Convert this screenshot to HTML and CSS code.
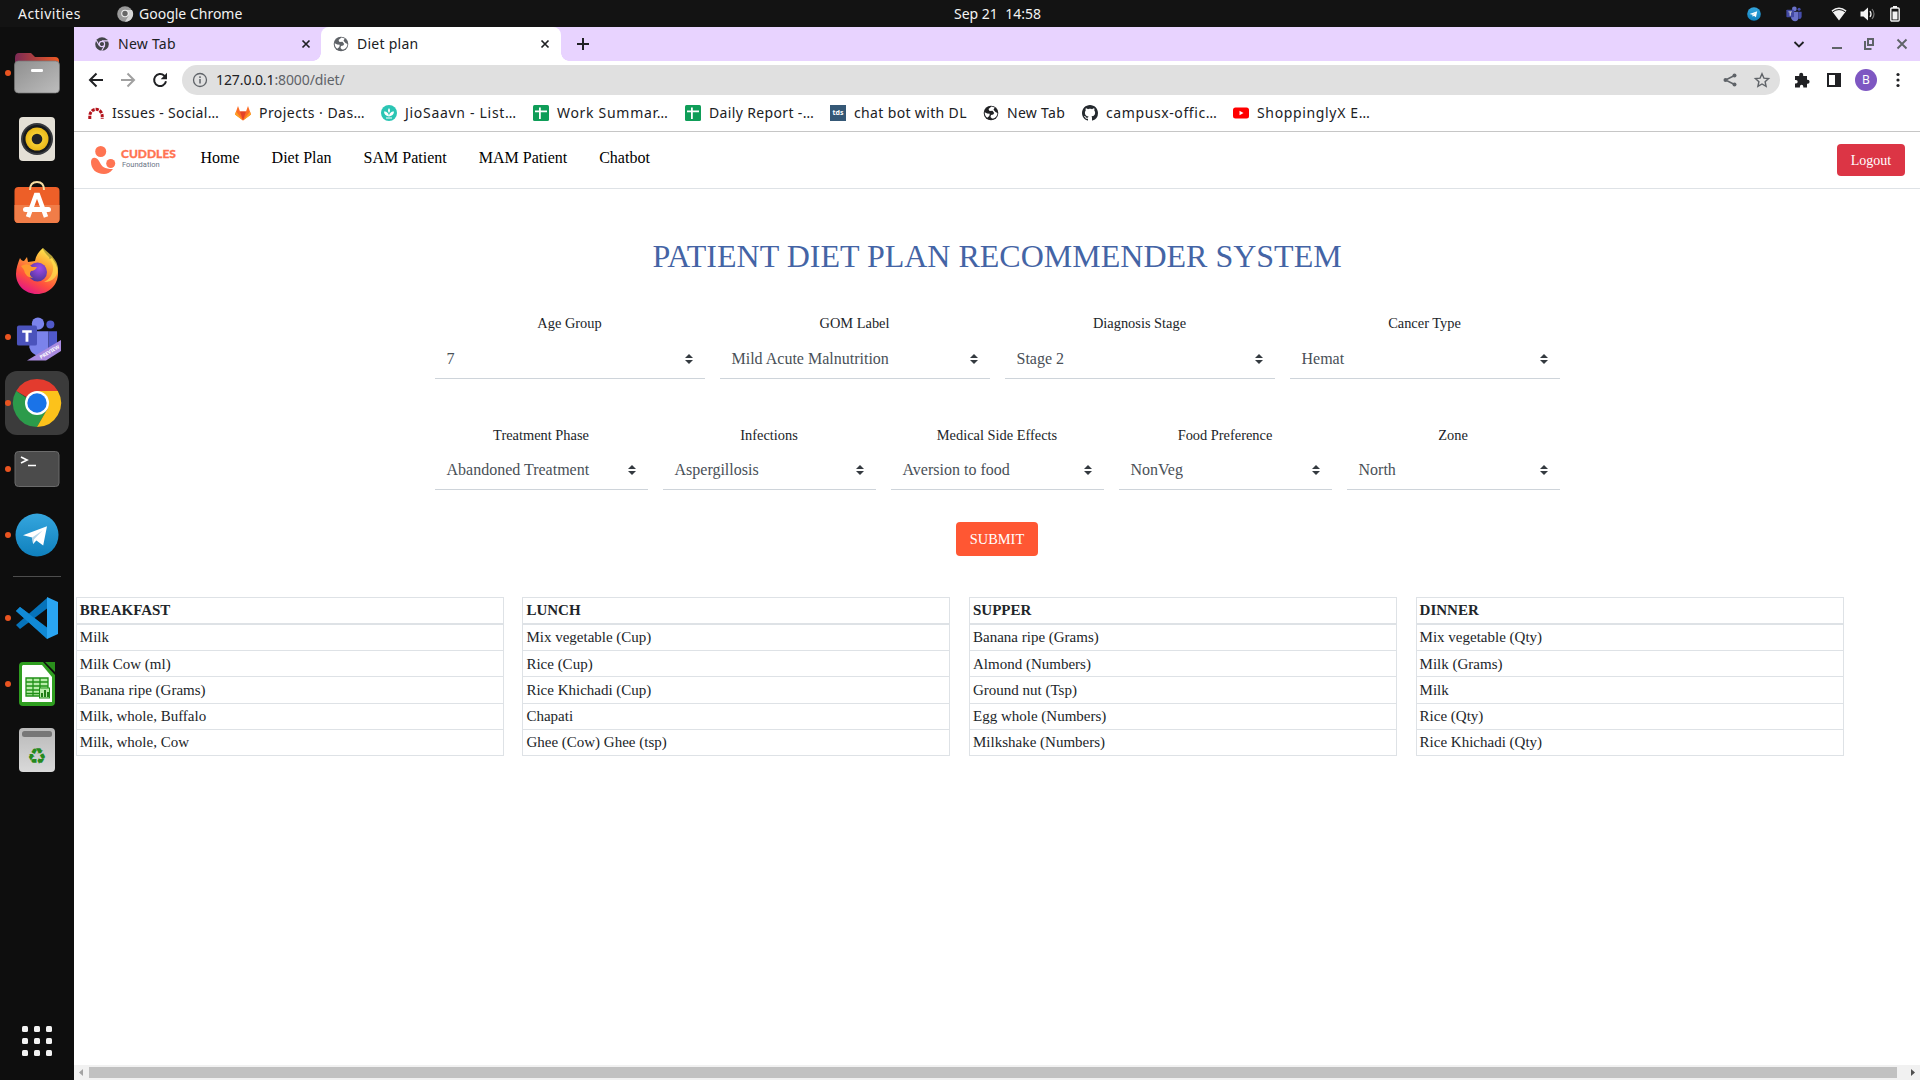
FILE: index.html
```html
<!DOCTYPE html>
<html lang="en">
<head>
<meta charset="utf-8">
<title>Diet plan</title>
<link rel="stylesheet" href="styles.css">
</head>
<body>
<svg class="defs" width="0" height="0" aria-hidden="true">
  <defs>
    <linearGradient id="folderBack" x1="0" y1="0" x2="1" y2="0"><stop offset="0" stop-color="#7b2a55"/><stop offset="1" stop-color="#ef5a24"/></linearGradient>
    <linearGradient id="folderFront" x1="0" y1="0" x2="1" y2="1"><stop offset="0" stop-color="#8f8f8f"/><stop offset="1" stop-color="#bdbdbd"/></linearGradient>
    <linearGradient id="foxBody" x1=".8" y1="0" x2=".3" y2="1"><stop offset="0" stop-color="#fff44f"/><stop offset=".35" stop-color="#ffa436"/><stop offset=".7" stop-color="#ff4f3e"/><stop offset="1" stop-color="#e31587"/></linearGradient>
    <radialGradient id="foxGlobe" cx=".6" cy=".3" r=".8"><stop offset="0" stop-color="#a04be8"/><stop offset="1" stop-color="#45338f"/></radialGradient>
    <linearGradient id="tg" x1="0" y1="0" x2="0" y2="1"><stop offset="0" stop-color="#35a6de"/><stop offset="1" stop-color="#0f80bd"/></linearGradient>
    <linearGradient id="bin" x1="0" y1="0" x2="0" y2="1"><stop offset="0" stop-color="#b9b9b9"/><stop offset="1" stop-color="#d9d9d9"/></linearGradient>
    <radialGradient id="cone"><stop offset="0" stop-color="#ffe14a"/><stop offset="1" stop-color="#eab818"/></radialGradient>
    <symbol id="telegram" viewBox="0 0 44 44"><circle cx="22" cy="22" r="21.5" fill="url(#tg)"/><path d="M8 22.3 32 13.2l-3.8 19.4-6.8-5-3.3 3.3-.9-6.3z" fill="#fff"/><path d="m17.2 24.6 10.3-7-8.4 8.6-1 4.700z" fill="#b4d6ea"/></symbol>
    <symbol id="teams" viewBox="0 0 44 44"><circle cx="23" cy="8" r="6.500" fill="#7b83eb"/><circle cx="36" cy="9" r="4.200" fill="#5059c9"/><path d="M14 16h20v17q0 8-9 9-9-1-11-9z" fill="#7b83eb"/><path d="M34 16h9v14q-1 6-9 6z" fill="#5059c9"/><rect x="1" y="10" width="21" height="21" rx="2" fill="#4b53bc"/><path d="M6.500 15h10v2.500h-3.500v9.500h-3v-9.500H6.500z" fill="#fff"/></symbol>
    <symbol id="sheet" viewBox="0 0 16 16"><rect width="16" height="16" rx="1.500" fill="#0f9d58"/><path d="M6 2.500h1.800v3h6.200v1.800H7.800V14H6V7.300H2V5.500h4z" fill="#fff"/></symbol>
    <symbol id="globe" viewBox="0 0 16 16"><circle cx="8" cy="8" r="7.300" fill="currentColor"/><path d="M8.500 1.500 5.500 4l1 2 3-.3 1.700 2.200-1 1.500-2.200.6-.5 2 1.500 1.600c3-.3 5.400-2.400 5.400-5.700L12.500 7l-2-2.300 1.200-2.200zM1.700 7.300l2.500 1.200 2.600.3-.5 2.200-2 1.800C2.500 11.500 1.700 10 1.700 7.300z" fill="var(--hole)"/></symbol>
    <symbol id="close" viewBox="0 0 10 10"><path d="m1.500 1.500 7 7m0-7-7 7" stroke="currentColor" stroke-width="1.700"/></symbol>
    <symbol id="updown" viewBox="0 0 4 5"><path d="M2 0 0 2h4zm0 5L0 3h4z" fill="#343a40"/></symbol>
  </defs>
</svg>
<div class="desktop">
  <header class="panel">
    <span class="activities">Activities</span>
    <svg class="panel-app-icon" viewBox="0 0 16 16"><circle cx="8" cy="8" r="7.800" fill="#9a9a9a"/><path d="M8 4h7A7.800 7.800 0 0 1 8 15.800L11.500 10z" fill="#d5d5d5"/><circle cx="8" cy="7.500" r="3.800" fill="#eee"/><circle cx="8" cy="7.500" r="2.700" fill="#666"/></svg>
    <span class="panel-app">Google Chrome</span>
    <span class="clock">Sep 21&nbsp; 14:58</span>
    <div class="tray">
      <svg class="tray-tg"><use href="#telegram"/></svg>
      <svg class="tray-teams"><use href="#teams"/></svg>
      <svg class="tray-wifi" viewBox="0 0 16 14"><path d="M.5 3.500Q8-2.500 15.500 3.500L8 13.500z" fill="#f2f2f2"/><path d="M1.800 4.800Q8 .3 14.200 4.800" fill="none" stroke="#131313"/></svg>
      <svg class="tray-vol" viewBox="0 0 16 14"><path d="M.5 4.500h3L8 .5v13l-4.500-4h-3z" fill="#f2f2f2"/><path d="M10 4q2 3 0 6" fill="none" stroke="#f2f2f2" stroke-width="1.300"/><path d="M12 2q4 5 0 10" fill="none" stroke="#777" stroke-width="1.200"/></svg>
      <svg class="tray-bat" viewBox="0 0 10 16"><path d="M3 0h4v2H3z" fill="#f2f2f2"/><rect x=".8" y="2" width="8.400" height="13" rx="1" fill="none" stroke="#f2f2f2" stroke-width="1.400"/><path d="M2.500 5.500h5v8h-5z" fill="#f2f2f2"/></svg>
    </div>
  </header>
  <div class="workspace">
    <nav class="dock">
      <div class="dock-item running"><svg viewBox="0 0 48 48"><path d="M2 9q0-5 4-5h12l4 4h20q4 0 4 4v10H2z" fill="url(#folderBack)"/><rect x="1.500" y="12" width="45" height="32" rx="4" fill="url(#folderFront)" stroke="#777" stroke-width=".7"/><rect x="18" y="20" width="12" height="3" rx="1.300" fill="#fff"/></svg></div>
      <div class="dock-item"><svg viewBox="0 0 48 48"><rect x="6" y="2" width="36" height="44" rx="4" fill="#e4e0d6"/><circle cx="24" cy="24" r="16" fill="#36383c"/><circle cx="24" cy="24" r="14" fill="#171a1d"/><circle cx="24" cy="24" r="11.500" fill="url(#cone)"/><circle cx="24" cy="24" r="5.300" fill="#202226"/></svg></div>
      <div class="dock-item"><svg viewBox="0 0 48 48"><rect x="1.500" y="6" width="45" height="36" rx="4" fill="#ed5f28"/><path d="M1.500 24h45v14q0 4-4 4h-37q-4 0-4-4z" fill="#f17d48"/><path d="M17 9q0-8 7-8t7 8" fill="none" stroke="#f6dda2" stroke-width="2"/><path d="m15 36 8-22h2l8 22" fill="none" stroke="#fff" stroke-width="4.500"/><rect x="10" y="26" width="28" height="5" rx="2.500" fill="#fff"/></svg></div>
      <div class="dock-item"><svg viewBox="0 0 48 48"><path d="M7 11c1 2 2 3 4 3l3-4 1 5 7-1c1-5 3-9 8-13 1 5 5 7 7 11l2-1c4 6 6 10 6 15 0 12-9 21-21 21S3 38 3 27c0-6 2-11 4-16z" fill="url(#foxBody)"/><path d="M30 1c0 6 8 9 10 18 1 8-4 14-9 16 9 0 14-6 14-14-1-6-3-8-6-12z" fill="#ffe14d" opacity=".7"/><circle cx="24.500" cy="25" r="9.500" fill="url(#foxGlobe)"/><path d="M8 19q7-4 11 1h5q-2 4-6 4-3 4 2 7-8-1-9-8z" fill="#ff9a2f"/></svg></div>
      <div class="dock-item running"><svg viewBox="0 0 48 48"><use href="#teams" x="2" y="3" width="44" height="42"/><path d="M14 47.500 48 27v11L33 47.500z" fill="#a98be0"/><text x="28" y="46" class="preview" transform="rotate(-31 28 46)">PREVIEW</text></svg></div>
      <div class="dock-item running focused"><svg viewBox="0 0 48 48"><path d="M24 24 3.200 12A24 24 0 0 1 44.800 12z" fill="#e33b2e"/><path d="M24 24h-3L3.200 12A24 24 0 0 0 24 48l10.400-18z" fill="#2c9b4b"/><path d="M24 12h20.800A24 24 0 0 1 24 48l10.400-18z" fill="#fcc21b"/><circle cx="24" cy="24" r="12" fill="#fff"/><circle cx="24" cy="24" r="9.700" fill="#1a73e8"/></svg></div>
      <div class="dock-item running"><svg viewBox="0 0 48 48"><rect x="2" y="6.500" width="44" height="35" rx="3.500" fill="#4b4b4b" stroke="#6b6b6b"/><path d="m8 12 6 3-6 3M15 20.500h8" fill="none" stroke="#fff" stroke-width="1.700"/></svg></div>
      <div class="dock-item running"><svg viewBox="0 0 48 48"><use href="#telegram" x="2" y="2" width="44" height="44"/></svg></div>
      <div class="dock-separator"></div>
      <div class="dock-item running"><svg viewBox="0 0 48 48"><path d="m3 17 4-4 29 22-2 9z" fill="#0f85d0"/><path d="m3 31 4 4 29-22-2-9z" fill="#0673ba"/><path d="m3 17 4-4 6 4.500L40 39l-6 6z" fill="#118ad6"/><path d="m34 3 11 5v32l-11 5z" fill="#2aa5f2"/></svg></div>
      <div class="dock-item running"><svg viewBox="0 0 48 48"><path d="M10 2h20l12 13v27q0 4-4 4H10q-4 0-4-4V6q0-4 4-4z" fill="#2f9e20"/><path d="M10 5h19l10 12v25H9V6z" fill="#fff"/><path d="M32 2h10v10z" fill="#2a8f1c"/><path d="M13 18h22v18H13z" fill="#b9ecaa"/><path d="M13 18h22v18H13zM13 22h22M13 26h22M13 30h22M13 33.500h22M20 18v18M27 18v18" fill="none" stroke="#1f9016" stroke-width="1.300"/><rect x="26.500" y="28" width="10" height="10" fill="#b9ecaa" stroke="#1f9016"/><path d="M28 33h2v4h-2zM31 30h2v7h-2zM34 32h2v5h-2z" fill="#1f7d16"/></svg></div>
      <div class="dock-item"><svg viewBox="0 0 48 48"><rect x="6" y="2" width="36" height="44" rx="4" fill="url(#bin)"/><rect x="9" y="5" width="30" height="6" rx="2.500" fill="#777"/><text x="24" y="38" class="recycle">♻</text></svg></div>
      <svg class="app-grid" viewBox="0 0 30 30"><g fill="#f2f2f2"><rect width="6" height="6" rx="1.500"/><rect x="12" width="6" height="6" rx="1.500"/><rect x="24" width="6" height="6" rx="1.500"/><rect y="12" width="6" height="6" rx="1.500"/><rect x="12" y="12" width="6" height="6" rx="1.500"/><rect x="24" y="12" width="6" height="6" rx="1.500"/><rect y="24" width="6" height="6" rx="1.500"/><rect x="12" y="24" width="6" height="6" rx="1.500"/><rect x="24" y="24" width="6" height="6" rx="1.500"/></g></svg>
    </nav>
    <div class="browser">
      <div class="tabs">
        <div class="tab tab-idle">
          <svg class="i14" viewBox="0 0 16 16"><circle cx="8" cy="8" r="7.800" fill="#44464a"/><circle cx="8" cy="8" r="3" fill="#44464a" stroke="#e8d3ff" stroke-width="1.300"/><path d="M8 4.400h7M4.900 9.800 1.400 3.700M11.100 9.800l-3.500 6" stroke="#e8d3ff" stroke-width="1.300"/></svg>
          <span>New Tab</span><svg class="x"><use href="#close"/></svg>
        </div>
        <div class="tab tab-active">
          <svg class="i16 grey-globe"><use href="#globe"/></svg>
          <span>Diet plan</span><svg class="x"><use href="#close"/></svg>
        </div>
        <svg class="plus" viewBox="0 0 12 12"><path d="M6 0v12M0 6h12" stroke="#202124" stroke-width="2"/></svg>
        <div class="window-controls">
          <svg class="wc" viewBox="0 0 12 12"><path d="m1.500 4 4.500 4.500L10.500 4" fill="none" stroke="#202124" stroke-width="1.800"/></svg>
          <svg class="wc wc-min" viewBox="0 0 12 12"><path d="M1 10h10" stroke="#5f6368" stroke-width="2"/></svg>
          <svg class="wc wc-max" viewBox="0 0 12 12"><path d="M5 1h5v6H5zM2 3v8h6.500" fill="none" stroke="#5f6368" stroke-width="2"/></svg>
          <svg class="wc wc-close" viewBox="0 0 12 12"><path d="m1.500 1.500 9 9m0-9-9 9" stroke="#5f6368" stroke-width="1.900"/></svg>
        </div>
      </div>
      <div class="toolbar">
        <svg class="nav-ico" viewBox="0 0 16 16"><path d="M15 8H2m6.500-6.500L2 8l6.500 6.500" fill="none" stroke="#202124" stroke-width="2"/></svg>
        <svg class="nav-ico" viewBox="0 0 16 16"><path d="M1 8h13M7.500 1.500 14 8l-6.500 6.500" fill="none" stroke="#a0a0a0" stroke-width="2"/></svg>
        <svg class="nav-ico" viewBox="0 0 16 16"><path d="M14 9.200A6 6 0 1 1 12.300 3.700L14 5.500" fill="none" stroke="#202124" stroke-width="2"/><path d="M15 .8v6.400H8.700z" fill="#202124"/></svg>
        <div class="omnibox">
          <svg class="i16 info" viewBox="0 0 16 16"><circle cx="8" cy="8" r="6.500" fill="none" stroke="#5f6368" stroke-width="1.300"/><path d="M8 7v4.500M8 4.300V6" stroke="#5f6368" stroke-width="1.500"/></svg>
          <span class="url"><b>127.0.0.1</b>:8000/diet/</span>
          <svg class="share" viewBox="0 0 14 14"><path d="M11.500 2.500 2.500 7l9 4.500" fill="none" stroke="#5f6368" stroke-width="1.500"/><g fill="#5f6368"><circle cx="11.500" cy="2.500" r="2"/><circle cx="2.500" cy="7" r="2"/><circle cx="11.500" cy="11.500" r="2"/></g></svg>
          <svg class="i16" viewBox="0 0 16 16"><path d="m8 1.800 1.900 4.300 4.700.5-3.500 3.100 1 4.700L8 12l-4.100 2.400 1-4.700L1.400 6.600l4.700-.5z" fill="none" stroke="#5f6368" stroke-width="1.400"/></svg>
        </div>
        <div class="extras">
          <svg class="i16" viewBox="0 0 16 16"><path d="M1 4h4.200V2.800a2 2 0 0 1 4 0V4H13v3.800h.6a2 2 0 0 1 0 4H13V15.500H9.300v-1a1.700 1.700 0 0 0-3.400 0v1H1v-4h1a1.700 1.700 0 0 0 0-3.400H1z" fill="#202124"/></svg>
          <svg class="i16" viewBox="0 0 16 16"><path d="M1 1h14v14H1zm2 2v10h6V3z" fill="#202124" fill-rule="evenodd"/></svg>
          <span class="avatar">B</span>
          <svg class="i16 kebab" viewBox="0 0 16 16"><g fill="#202124"><circle cx="8" cy="2.500" r="1.600"/><circle cx="8" cy="8" r="1.600"/><circle cx="8" cy="13.500" r="1.600"/></g></svg>
        </div>
      </div>
      <div class="bookmarks">
        <div class="bm b1"><svg class="i16" viewBox="0 0 16 16"><path d="M1.800 14v-3A6.200 6.700 0 0 1 14.200 11v3" fill="none" stroke="#b3121a" stroke-width="3" stroke-dasharray="3.200 1"/></svg><span>Issues - Social…</span></div>
        <div class="bm b2"><svg class="i16" viewBox="0 0 16 16"><path d="M8 15.500 0 9.500 3 1l2 5.500h6L13 1l3 8.500z" fill="#fc6d26"/><path d="M8 15.500 5 6.500h6z" fill="#e24329"/><path d="M8 15.500 0 9.500l1-3zM8 15.500l8-6-1-3z" fill="#fca326"/></svg><span>Projects · Das…</span></div>
        <div class="bm b3"><svg class="i16" viewBox="0 0 16 16"><circle cx="8" cy="8" r="8" fill="#2bc5b4"/><path d="M8 11.500C4.500 11 3 9 3 6.500 6 6.500 8 8.500 8 11.500 8 8.500 10 6.500 13 6.500 13 9 11.500 11 8 11.500zM8 8Q6 5.500 8 3q2 2.500 0 5zM5 12.500h6v1H5z" fill="#fff"/></svg><span>JioSaavn - List…</span></div>
        <div class="bm b4"><svg class="i16"><use href="#sheet"/></svg><span>Work Summar…</span></div>
        <div class="bm b5"><svg class="i16"><use href="#sheet"/></svg><span>Daily Report -…</span></div>
        <div class="bm b6"><span class="tds">tds</span><span>chat bot with DL</span></div>
        <div class="bm b7"><svg class="i16 dark-globe"><use href="#globe"/></svg><span>New Tab</span></div>
        <div class="bm b8"><svg class="i16" viewBox="0 0 16 16"><path d="M8 0C3.580 0 0 3.580 0 8c0 3.540 2.290 6.530 5.470 7.590.4.070.55-.17.55-.38 0-.19-.01-.82-.01-1.490-2.010.37-2.530-.49-2.690-.94-.09-.23-.48-.94-.82-1.130-.28-.15-.68-.52-.01-.53.63-.01 1.080.58 1.230.82.72 1.210 1.870.87 2.330.66.07-.52.28-.87.51-1.070-1.780-.2-3.640-.89-3.640-3.950 0-.87.31-1.590.82-2.150-.08-.2-.36-1.020.08-2.120 0 0 .67-.21 2.200.82.64-.18 1.320-.27 2-.27s1.360.09 2 .27c1.530-1.040 2.200-.82 2.200-.82.44 1.100.16 1.920.08 2.120.51.56.82 1.270.82 2.150 0 3.070-1.870 3.750-3.650 3.950.29.25.54.73.54 1.480 0 1.070-.01 1.930-.01 2.200 0 .21.15.46.55.38A8.013 8.013 0 0 0 16 8c0-4.420-3.580-8-8-8z" fill="#24292e"/></svg><span>campusx-offic…</span></div>
        <div class="bm b9"><svg class="i16" viewBox="0 0 16 16"><rect y="2.500" width="16" height="11" rx="2.500" fill="#f00"/><path d="m6.500 5.800 4 2.200-4 2.200z" fill="#fff"/></svg><span>ShoppinglyX E…</span></div>
      </div>
      <main class="page">
        <div class="navbar">
          <div class="brand">
            <svg viewBox="0 0 26 30"><circle cx="10.700" cy="6.500" r="5.500" fill="#ff7452"/><circle cx="20.700" cy="18.500" r="4.500" fill="#ff7452"/><path d="M1 17c0-5 5-6 8-1 3 6 5 8 14 8-3 4-6 5-9 5C6 29 1 24 1 17z" fill="#ff7452"/></svg>
            <div><div class="brand-name">CUDDLES</div><div class="brand-sub">Foundation</div></div>
          </div>
          <a>Home</a><a>Diet Plan</a><a>SAM Patient</a><a>MAM Patient</a><a>Chatbot</a>
          <button class="logout">Logout</button>
        </div>
        <h1>PATIENT DIET PLAN RECOMMENDER SYSTEM</h1>
        <form class="diet-form">
          <div class="form-row four">
            <label class="field">Age Group<span class="select">7<svg><use href="#updown"/></svg></span></label>
            <label class="field">GOM Label<span class="select">Mild Acute Malnutrition<svg><use href="#updown"/></svg></span></label>
            <label class="field">Diagnosis Stage<span class="select">Stage 2<svg><use href="#updown"/></svg></span></label>
            <label class="field">Cancer Type<span class="select">Hemat<svg><use href="#updown"/></svg></span></label>
          </div>
          <div class="form-row five">
            <label class="field">Treatment Phase<span class="select">Abandoned Treatment<svg><use href="#updown"/></svg></span></label>
            <label class="field">Infections<span class="select">Aspergillosis<svg><use href="#updown"/></svg></span></label>
            <label class="field">Medical Side Effects<span class="select">Aversion to food<svg><use href="#updown"/></svg></span></label>
            <label class="field">Food Preference<span class="select">NonVeg<svg><use href="#updown"/></svg></span></label>
            <label class="field">Zone<span class="select">North<svg><use href="#updown"/></svg></span></label>
          </div>
          <button class="submit" type="button">SUBMIT</button>
        </form>
        <div class="meals">
          <ul class="meal"><li class="head">BREAKFAST</li><li>Milk</li><li class="low">Milk Cow (ml)</li><li class="low tall">Banana ripe (Grams)</li><li>Milk, whole, Buffalo</li><li>Milk, whole, Cow</li></ul>
          <ul class="meal"><li class="head">LUNCH</li><li>Mix vegetable (Cup)</li><li class="low">Rice (Cup)</li><li class="low tall">Rice Khichadi (Cup)</li><li>Chapati</li><li>Ghee (Cow) Ghee (tsp)</li></ul>
          <ul class="meal"><li class="head">SUPPER</li><li>Banana ripe (Grams)</li><li class="low">Almond (Numbers)</li><li class="low tall">Ground nut (Tsp)</li><li>Egg whole (Numbers)</li><li>Milkshake (Numbers)</li></ul>
          <ul class="meal"><li class="head">DINNER</li><li>Mix vegetable (Qty)</li><li class="low">Milk (Grams)</li><li class="low tall">Milk</li><li>Rice (Qty)</li><li>Rice Khichadi (Qty)</li></ul>
        </div>
      </main>
      <div class="scrollbar">
        <svg viewBox="0 0 4 7"><path d="M4 0v7L0 3.500z" fill="#a3a3a3"/></svg>
        <div class="thumb"></div>
        <svg viewBox="0 0 4 7"><path d="M0 0v7l4-3.500z" fill="#505050"/></svg>
      </div>
    </div>
  </div>
</div>
</body>
</html>
```
FILE: styles.css
```css
* { box-sizing: border-box; }
body { margin: 0; background: #fff; }
.defs { position: absolute; }
svg { display: block; flex: none; overflow: visible; }
.desktop { width: 1920px; height: 1080px; display: flex; flex-direction: column; overflow: hidden; font: 14px/20px "Noto Sans", sans-serif; white-space: nowrap; }

/* top panel */
.panel { height: 27px; background: #131313; color: #f2f2f2; display: flex; align-items: center; padding-left: 18px; }
.activities { width: 99px; letter-spacing: .45px; }
.panel-app-icon { width: 16px; height: 16px; margin-right: 6px; }
.panel-app { width: 815px; }
.clock { width: 793px; }
.tray { display: flex; align-items: center; }
.tray-tg { width: 14px; height: 14px; margin-right: 25px; }
.tray-teams { width: 16px; height: 16px; margin-right: 29px; opacity: .85; }
.tray-wifi { width: 16px; height: 14px; margin-right: 13px; }
.tray-vol { width: 16px; height: 14px; margin-right: 14px; }
.tray-bat { width: 10px; height: 16px; }

/* dock */
.workspace { flex: 1; display: flex; min-height: 0; }
.dock { width: 74px; background: #0e0e0e; padding: 13px 5px 24px; display: flex; flex-direction: column; align-items: center; }
.dock-item { width: 64px; height: 64px; margin: 1px 0; display: flex; align-items: center; justify-content: center; position: relative; border-radius: 12px; }
.dock-item > svg { width: 48px; height: 48px; }
.focused { background: #3b3b3b; }
.running::before { content: ""; position: absolute; left: 0; top: 29px; width: 6px; height: 6px; border-radius: 3px; background: #e95420; }
.dock-separator { width: 48px; height: 1px; margin: 8px 0; background: #4d4d4d; }
.preview { font: bold 5px "Noto Sans", sans-serif; fill: #fff; }
.recycle { font: 22px "DejaVu Sans", sans-serif; fill: #268a1e; text-anchor: middle; }
.app-grid { width: 30px; height: 30px; margin-top: auto; }

/* browser chrome */
.browser { flex: 1; display: flex; flex-direction: column; min-width: 0; background: #fff; color: #202124; }
.i16 { width: 16px; height: 16px; }
.i14 { width: 14px; height: 14px; }
.tabs { height: 34px; background: #e8d3ff; display: flex; align-items: center; }
.tab { height: 34px; display: flex; align-items: center; letter-spacing: .25px; }
.tab span { flex: 1; }
.tab-idle { width: 247px; padding: 0 10px 0 21px; gap: 9px; }
.tab-active { width: 240px; padding: 0 11px 0 12px; gap: 8px; background: #fff; border-radius: 8px 8px 0 0; position: relative; }
.tab-active::before, .tab-active::after { content: ""; position: absolute; bottom: 0; width: 8px; height: 8px; }
.tab-active::before { right: 100%; background: radial-gradient(circle at 0 0, transparent 7.500px, #fff 8px); }
.tab-active::after { left: 100%; background: radial-gradient(circle at 100% 0, transparent 7.500px, #fff 8px); }
.x { width: 10px; height: 10px; }
.grey-globe { color: #5f6368; --hole: #fff; }
.dark-globe { color: #202124; --hole: #fff; }
.plus { width: 12px; height: 12px; margin-left: 16px; }
.window-controls { margin-left: auto; display: flex; padding-right: 12px; }
.wc { width: 12px; height: 12px; }
.wc-min { margin-left: 26px; }
.wc-max { margin-left: 20px; }
.wc-close { margin-left: 21px; }
.toolbar { height: 38px; display: flex; align-items: center; padding-left: 14px; }
.nav-ico { width: 16px; height: 16px; margin-right: 16px; }
.omnibox { width: 1598px; height: 30px; margin-left: -2px; border-radius: 15px; background: #e0e0e0; display: flex; align-items: center; padding: 0 10px; }
.info { margin-right: 8px; }
.url { flex: 1; color: #5f6368; letter-spacing: -.1px; }
.url b { font-weight: 400; color: #202124; }
.share { width: 14px; height: 14px; margin-right: 17px; }
.extras { display: flex; align-items: center; padding-left: 14px; }
.extras .i16 + .i16 { margin-left: 16px; }
.avatar { width: 22px; height: 22px; margin: 0 13px; border-radius: 50%; background: #7e57c2; color: #fff; font-size: 12px; line-height: 22px; text-align: center; }
.bookmarks { height: 33px; border-bottom: 1px solid #c6c6c6; display: flex; align-items: center; padding: 0 0 4px 14px; }
.bm { display: flex; align-items: center; gap: 8px; }
.b1 { width: 147px; letter-spacing: .3px; }
.b2 { width: 146px; letter-spacing: .45px; }
.b3 { width: 152px; letter-spacing: .7px; }
.b4 { width: 152px; letter-spacing: .7px; }
.b5 { width: 145px; letter-spacing: .35px; }
.b6 { width: 153px; letter-spacing: .35px; }
.b7 { width: 99px; letter-spacing: .3px; }
.b8 { width: 151px; letter-spacing: .6px; }
.b9 { letter-spacing: .65px; }
.tds { width: 16px; height: 16px; background: #355876; color: #fff; font-size: 7px; font-weight: 700; line-height: 16px; text-align: center; letter-spacing: 0; }

/* page */
.page { flex: 1; font: 16px/24px "Liberation Serif", serif; color: #212529; }
.navbar { height: 57px; border-bottom: 1px solid #dee2e6; display: flex; align-items: flex-start; padding: 12px 15px 0 16px; color: #000; }
.navbar a { margin: 2px 32px 0 0; }
.brand { width: 110.500px; display: flex; gap: 5px; margin-top: 1px; }
.brand svg { width: 26px; height: 30px; }
.brand-name { font: 900 12px/14px "Lato", sans-serif; color: #ff7452; margin-top: 2px; -webkit-text-stroke: .3px #ff7452; }
.brand-sub { font: 7.500px/8px "Roboto", sans-serif; color: #6a7486; padding-left: 1px; }
.logout { width: 68px; height: 32px; margin-left: auto; padding: 1px 0 0; border: 0; border-radius: 4px; background: #dc3545; color: #fff; font: 14px/20px "Liberation Serif", serif; }
h1 { margin: 48px 0 0; text-align: center; color: #4464a5; font: 400 32px/38px "Liberation Serif", serif; }
.diet-form { width: 1125px; margin: 37px auto 0; display: flex; flex-direction: column; align-items: center; }
.form-row { width: 1125px; height: 111px; display: grid; column-gap: 15px; }
.four { grid-template-columns: repeat(4, 1fr); }
.five { grid-template-columns: repeat(5, 1fr); }
.field { font-size: 14.400px; line-height: 22px; text-align: center; }
.select { height: 39px; margin-top: 6px; padding: 0 12px 1px; border-bottom: 1px solid #ced4da; display: flex; align-items: center; justify-content: space-between; font-size: 16px; color: #495057; }
.select svg { width: 8px; height: 12px; }
.five .field { padding-top: 1px; }
.five .select { margin-top: 5px; }
.submit { width: 82px; height: 34px; margin-top: -12px; border: 0; border-radius: 4px; background: #ff5733; color: #fff; font: 14.400px/20px "Liberation Serif", serif; }
.meals { display: grid; grid-template-columns: repeat(4, 428px); column-gap: 18.600px; margin: 41px 0 0 1.800px; }
.meal { list-style: none; margin: 0; padding: 0; border: 1px solid #dee2e6; border-bottom: 0; font-size: 15px; line-height: 25px; }
.meal li { height: 26px; border-bottom: 1px solid #dee2e6; padding-left: 3px; }
.meal .head { height: 27px; border-bottom-width: 2px; font-weight: 700; }
.meal .low { padding-top: 1px; }
.meal .tall { height: 27px; }

.scrollbar { height: 15px; background: #f1f1f1; display: flex; align-items: center; padding: 0 5px; }
.scrollbar svg { width: 4px; height: 7px; }
.thumb { width: 1808px; height: 11px; background: #c1c1c1; margin: 0 14px 0 6px; }
```
